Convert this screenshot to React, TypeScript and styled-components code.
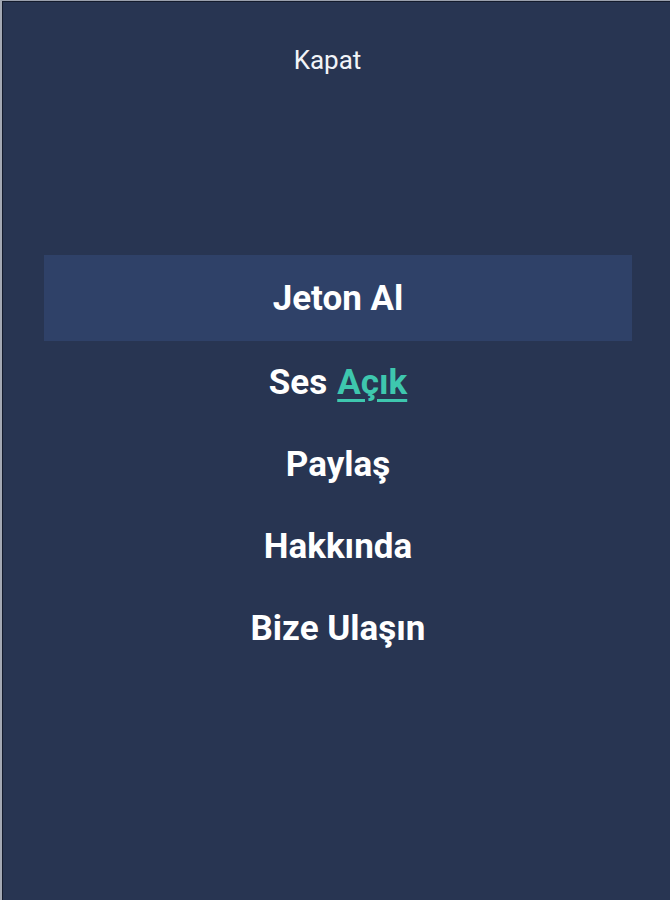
import React from "react";
import styled, { createGlobalStyle } from "styled-components";

const Global = createGlobalStyle`
  html, body { margin: 0; padding: 0; background: #283552; }
  * { box-sizing: border-box; }
`;

const Screen = styled.div`
  width: 670px;
  height: 900px;
  background: #283552;
  border-top: 1px solid #9aa0ad;
  border-left: 2px solid #a4a9b4;
  box-shadow: inset 1px 1px 0 #141b2c;
  font-family: Roboto, "Liberation Sans", sans-serif;
  color: #ffffff;
  display: flex;
  flex-direction: column;
  padding: 0 38px 0 42px;
`;

const CloseButton = styled.button`
  align-self: center;
  margin: 43px 0 0 -21px;
  background: none;
  border: none;
  color: #f2f4f8;
  font-family: inherit;
  font-size: 26px;
  font-weight: 400;
  line-height: 32px;
  padding: 0;
  cursor: pointer;
`;

const Menu = styled.nav`
  margin-top: 179px;
  display: flex;
  flex-direction: column;
`;

const Item = styled.div<{ $active?: boolean }>`
  height: 82px;
  display: flex;
  align-items: center;
  justify-content: center;
  font-size: 35px;
  font-weight: 700;
  color: #ffffff;
  background: ${(p) => (p.$active ? "#2f4168" : "transparent")};
  ${(p) => (p.$active ? "height: 86px;" : "")}
`;

const Toggle = styled.span`
  color: #3ec7ae;
  text-decoration: underline;
  text-decoration-thickness: 3px;
  text-underline-offset: 5px;
  margin-left: 10px;
`;

export default function App() {
  return (
    <>
      <Global />
      <Screen>
        <CloseButton>Kapat</CloseButton>
        <Menu>
          <Item $active>Jeton Al</Item>
          <Item>
            Ses<Toggle>Açık</Toggle>
          </Item>
          <Item>Paylaş</Item>
          <Item>Hakkında</Item>
          <Item>Bize Ulaşın</Item>
        </Menu>
      </Screen>
    </>
  );
}
